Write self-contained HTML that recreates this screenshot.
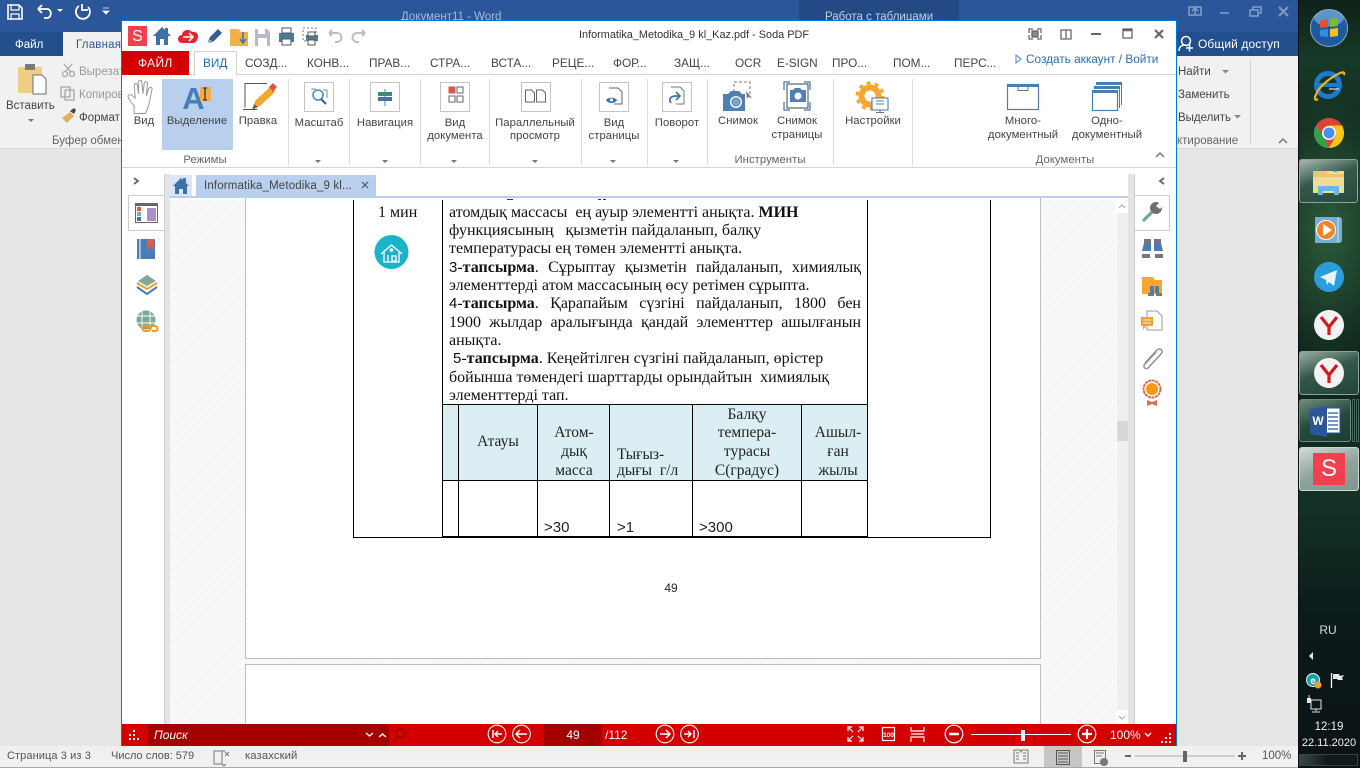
<!DOCTYPE html>
<html lang="ru"><head><meta charset="utf-8"><title>Soda PDF</title>
<style>
html,body{margin:0;padding:0;width:1360px;height:768px;overflow:hidden;background:#e6e6e6}
body{position:relative;font-family:"Liberation Sans",sans-serif;font-size:11.5px;color:#444}
.b{position:absolute}
.t{position:absolute;white-space:pre;line-height:14px}
.c{transform:translateX(-50%);text-align:center}
.w{font-size:11.5px;color:#444}
.r{font-size:11.3px;letter-spacing:.05px;color:#444}
.tab{font-size:11.8px;color:#444;top:56px}
.d{font-family:"Liberation Serif",serif;font-size:16px;color:#111;left:449px;line-height:18px}
.j{width:412px;white-space:normal;text-align:justify;text-align-last:justify}
.h{font-family:"Liberation Serif",serif;font-size:15.5px;color:#222}
.v{position:absolute;width:1px;background:#000}
.s{position:absolute;width:1px;background:#dcdcdc;top:79px;height:86px}
.ibox{position:absolute;width:28px;height:28px;border:1px solid #c4c4c4;top:82px;background:#fff}
.hatch{background:repeating-linear-gradient(135deg,#f0f0f0 0,#f0f0f0 1px,#fbfbfb 1px,#fbfbfb 3px)}
</style></head><body>

<!-- Word window -->
<div class="b" style="left:0;top:0;width:1298px;height:32px;background:#2b579a"></div>
<div class="b" style="left:0;top:32px;width:1298px;height:24px;background:#234f8c"></div>
<div class="b" style="left:799px;top:0;width:160px;height:32px;background:#234a84"></div>
<div class="b" style="left:63px;top:32px;width:60px;height:24px;background:#f1f1f1"></div>
<div class="b" style="left:0;top:56px;width:1298px;height:92px;background:#f1f1f1;border-bottom:1px solid #d8d8d8"></div>
<div class="b" style="left:0;top:149px;width:1298px;height:597px;background:#e6e6e6"></div>
<div class="t" style="left:401px;top:10px;font-size:11.5px;color:#a9b9d3">Документ11 - Word</div>
<div class="t" style="left:825px;top:10px;font-size:11.5px;color:#c4d0e3">Работа с таблицами</div>
<div class="t" style="left:15px;top:38px;color:#fff;font-size:11.5px">Файл</div>
<div class="t" style="left:76px;top:38px;color:#2b579a;font-size:11.5px;letter-spacing:.2px">Главная</div>
<div class="t" style="left:1198px;top:37px;color:#fff;font-size:12px;letter-spacing:.1px">Общий доступ</div>
<div class="t w" style="left:6px;top:99px">Вставить</div>
<div class="t w" style="left:79px;top:65px;color:#999">Вырезать</div>
<div class="t w" style="left:79px;top:88px;color:#999">Копировать</div>
<div class="t w" style="left:79px;top:111px">Формат</div>
<div class="t w" style="left:52px;top:134px;color:#666">Буфер обмена</div>
<div class="t w" style="left:1178px;top:65px">Найти</div>
<div class="t w" style="left:1178px;top:88px">Заменить</div>
<div class="t w" style="left:1178px;top:111px">Выделить</div>
<div class="t w" style="left:1177px;top:134px;color:#666">ктирование</div>
<div class="b" style="left:1250px;top:60px;width:1px;height:84px;background:#d0d0d0"></div>

<!-- Word status bar -->
<div class="b" style="left:0;top:746px;width:1298px;height:21px;background:#f0f0f0;border-bottom:1px solid #a8a8a8"></div>
<div class="b" style="left:1044px;top:746px;width:38px;height:21px;background:#c6c6c6"></div>
<div class="t" style="left:7px;top:749px;font-size:11px;color:#555;letter-spacing:.1px">Страница 3 из 3</div>
<div class="t" style="left:111px;top:749px;font-size:11px;color:#555">Число слов: 579</div>
<div class="t" style="left:245px;top:749px;font-size:11.3px;color:#555;letter-spacing:.1px">казахский</div>
<div class="t" style="left:1262px;top:749px;font-size:11.5px;color:#555">100%</div>

<!-- Soda window -->
<div class="b" style="left:121px;top:20px;width:1056px;height:726px;background:#fff;border:solid #0078d7;border-width:1px 1px 0 1px;box-sizing:border-box"></div>
<div class="t" style="left:579px;top:28px;font-size:10.9px;color:#333">Informatika_Metodika_9 kl_Kaz.pdf - Soda PDF</div>

<div class="b" style="left:122px;top:74px;width:1054px;height:1px;background:#d4d4d4"></div>
<div class="b" style="left:122px;top:51px;width:67px;height:24px;background:#d40000"></div>
<div class="b" style="left:194px;top:51px;width:41px;height:24px;background:#fff;border:1px solid #d0d0d0;border-bottom:none"></div>
<div class="t" style="left:138px;top:56px;color:#fff;font-size:12px;letter-spacing:.3px">ФАЙЛ</div>
<div class="t tab" style="left:203px;color:#1e6fc0">ВИД</div>
<div class="t tab" style="left:245px">СОЗД...</div>
<div class="t tab" style="left:307px">КОНВ...</div>
<div class="t tab" style="left:369px">ПРАВ...</div>
<div class="t tab" style="left:430px">СТРА...</div>
<div class="t tab" style="left:491px">ВСТА...</div>
<div class="t tab" style="left:552px">РЕЦЕ...</div>
<div class="t tab" style="left:613px">ФОР...</div>
<div class="t tab" style="left:674px">ЗАЩ...</div>
<div class="t tab" style="left:735px">OCR</div>
<div class="t tab" style="left:777px">E-SIGN</div>
<div class="t tab" style="left:832px">ПРО...</div>
<div class="t tab" style="left:893px">ПОМ...</div>
<div class="t tab" style="left:954px">ПЕРС...</div>
<div class="t" style="left:1026px;top:52px;color:#2a6cb5;font-size:11.8px">Создать аккаунт / Войти</div>

<!-- Soda ribbon -->
<div class="b" style="left:162px;top:79px;width:71px;height:71px;background:#b8cfed"></div>
<div class="b" style="left:122px;top:167px;width:1054px;height:1px;background:#d4d4d4"></div>
<div class="s" style="left:288px"></div><div class="s" style="left:349px"></div><div class="s" style="left:420px"></div><div class="s" style="left:489px"></div><div class="s" style="left:581px"></div><div class="s" style="left:647px"></div><div class="s" style="left:707px"></div><div class="s" style="left:833px"></div><div class="s" style="left:912px"></div>
<div class="ibox" style="left:304px"></div><div class="ibox" style="left:370px"></div><div class="ibox" style="left:440px"></div><div class="ibox" style="left:521px"></div><div class="ibox" style="left:599px"></div><div class="ibox" style="left:662px"></div>

<div class="t r c" style="left:144px;top:114px">Вид</div>
<div class="t r c" style="left:197px;top:114px">Выделение</div>
<div class="t r c" style="left:258px;top:114px">Правка</div>
<div class="t r c" style="left:319px;top:116px">Масштаб</div>
<div class="t r c" style="left:385px;top:116px">Навигация</div>
<div class="t r c" style="left:455px;top:116px">Вид</div>
<div class="t r c" style="left:455px;top:129px">документа</div>
<div class="t r c" style="left:535px;top:116px">Параллельный</div>
<div class="t r c" style="left:535px;top:129px">просмотр</div>
<div class="t r c" style="left:614px;top:116px">Вид</div>
<div class="t r c" style="left:614px;top:129px">страницы</div>
<div class="t r c" style="left:677px;top:116px">Поворот</div>
<div class="t r c" style="left:738px;top:114px">Снимок</div>
<div class="t r c" style="left:797px;top:114px">Снимок</div>
<div class="t r c" style="left:797px;top:128px">страницы</div>
<div class="t r c" style="left:873px;top:114px">Настройки</div>
<div class="t r c" style="left:1023px;top:114px">Много-</div>
<div class="t r c" style="left:1023px;top:128px">документный</div>
<div class="t r c" style="left:1107px;top:114px">Одно-</div>
<div class="t r c" style="left:1107px;top:128px">документный</div>
<div class="t r c" style="left:205px;top:153px;color:#666">Режимы</div>
<div class="t r c" style="left:770px;top:153px;color:#666">Инструменты</div>
<div class="t r c" style="left:1065px;top:153px;color:#666">Документы</div>

<!-- Tab strip -->
<div class="b" style="left:170px;top:175px;width:22px;height:21px;background:#dbe6f5"></div>
<div class="b" style="left:196px;top:175px;width:180px;height:21px;background:#b8cfed"></div>
<div class="b" style="left:170px;top:196px;width:958px;height:2px;background:#b8cfed"></div>
<div class="t" style="left:204px;top:179px;font-size:11.5px;color:#444;letter-spacing:.15px">Informatika_Metodika_9 kl...</div>

<!-- side gutters -->
<div class="b" style="left:164px;top:174px;width:6px;height:550px;background:#e4e4e4;border-left:1px solid #d0d0d0;box-sizing:border-box"></div>
<div class="b" style="left:1128px;top:174px;width:7px;height:550px;background:#e4e4e4;border-right:1px solid #d0d0d0;box-sizing:border-box"></div>
<div class="b" style="left:128px;top:195px;width:36px;height:36px;background:#fff;border:1px solid #ccc;border-right:none;box-sizing:border-box"></div>
<div class="b" style="left:1135px;top:195px;width:35px;height:36px;background:#fff;border:1px solid #ccc;border-left:none;box-sizing:border-box"></div>

<!-- Doc area -->
<div class="b hatch" style="left:170px;top:200px;width:946px;height:524px"></div>
<div class="b" style="left:1117px;top:198px;width:11px;height:526px;background:#fff"></div>
<div class="b" style="left:1117px;top:213px;width:11px;height:497px;background:#efefef"></div>
<div class="b" style="left:1117px;top:421px;width:11px;height:20px;background:#d8d8d8"></div>
<div class="b" style="left:245px;top:198px;width:794px;height:460px;background:#fff;border:solid #bdbdbd;border-width:0 1px 1px 1px"></div>
<div class="b" style="left:245px;top:664px;width:794px;height:60px;background:#fff;border:solid #bdbdbd;border-width:1px 1px 0 1px"></div>

<!-- Doc table -->
<div class="v" style="left:353px;top:200px;height:338px"></div>
<div class="v" style="left:442px;top:200px;height:338px"></div>
<div class="v" style="left:867px;top:200px;height:338px"></div>
<div class="v" style="left:990px;top:200px;height:338px"></div>
<div class="b" style="left:443px;top:405px;width:424px;height:75px;background:#daeef3"></div>
<div class="b" style="left:442px;top:404px;width:425px;height:1px;background:#000"></div>
<div class="b" style="left:442px;top:480px;width:425px;height:1px;background:#000"></div>
<div class="b" style="left:353px;top:537px;width:638px;height:1px;background:#000"></div>
<div class="b" style="left:442px;top:536px;width:425px;height:2px;background:#000"></div>
<div class="v" style="left:458px;top:404px;height:133px"></div>
<div class="v" style="left:537px;top:404px;height:133px"></div>
<div class="v" style="left:609px;top:404px;height:133px"></div>
<div class="v" style="left:692px;top:404px;height:133px"></div>
<div class="v" style="left:801px;top:404px;height:133px"></div>

<div class="t d" style="left:378px;top:204px">1 мин</div>
<div class="t d" style="top:204px">атомдық массасы  ең ауыр элементті анықта. <b>МИН</b></div>
<div class="t d" style="top:222px">функциясының   қызметін пайдаланып, балқу</div>
<div class="t d" style="top:240px">температурасы ең төмен элементті анықта.</div>
<div class="t d j" style="top:259px"><span style="font-family:'Liberation Sans';font-size:15px">3</span>-<b>тапсырма</b>.  Сұрыптау қызметін пайдаланып, химиялық</div>
<div class="t d" style="top:277px">элементтерді атом массасының өсу ретімен сұрыпта.</div>
<div class="t d j" style="top:295px"><span style="font-family:'Liberation Sans';font-size:15px">4</span>-<b>тапсырма</b>. Қарапайым сүзгіні пайдаланып,  1800 бен</div>
<div class="t d j" style="top:314px">1900 жылдар аралығында қандай элементтер ашылғанын</div>
<div class="t d" style="top:332px">анықта.</div>
<div class="t d" style="top:350px"> <span style="font-family:'Liberation Sans';font-size:15px">5</span>-<b>тапсырма</b>. Кеңейтілген сүзгіні пайдаланып, өрістер</div>
<div class="t d" style="top:369px">бойынша төмендегі шарттарды орындайтын  химиялық</div>
<div class="t d" style="top:387px">элементтерді тап.</div>

<div class="t h c" style="left:498px;top:435px">Атауы</div>
<div class="t h c" style="left:574px;top:426px">Атом-</div>
<div class="t h c" style="left:574px;top:445px">дық</div>
<div class="t h c" style="left:574px;top:464px">масса</div>
<div class="t h" style="left:617px;top:448px">Тығыз-</div>
<div class="t h" style="left:617px;top:464px">дығы  г/л</div>
<div class="t h c" style="left:747px;top:408px">Балқу</div>
<div class="t h c" style="left:747px;top:426px">темпера-</div>
<div class="t h c" style="left:747px;top:445px">турасы</div>
<div class="t h c" style="left:747px;top:464px">С(градус)</div>
<div class="t h c" style="left:838px;top:426px">Ашыл-</div>
<div class="t h c" style="left:838px;top:445px">ған</div>
<div class="t h c" style="left:838px;top:464px">жылы</div>
<div class="t" style="left:544px;top:521px;font-size:15px;color:#222">&gt;30</div>
<div class="t" style="left:617px;top:521px;font-size:15px;color:#222">&gt;1</div>
<div class="t" style="left:699px;top:521px;font-size:15px;color:#222">&gt;300</div>
<div class="t c" style="left:671px;top:581px;font-size:12px;color:#222">49</div>

<!-- Red bar -->
<div class="b" style="left:122px;top:724px;width:1054px;height:22px;background:#d40000"></div>
<div class="b" style="left:148px;top:724px;width:241px;height:22px;background:#a50000"></div>
<div class="b" style="left:544px;top:724px;width:58px;height:22px;background:#a50000"></div>
<div class="t" style="left:154px;top:728px;color:#fff;font-style:italic;font-size:12px">Поиск</div>
<div class="t c" style="left:573px;top:728px;color:#fff;font-size:12px">49</div>
<div class="t" style="left:605px;top:728px;color:#fff;font-size:12px">/112</div>
<div class="t" style="left:1110px;top:728px;color:#fff;font-size:12px">100%</div>

<!-- Taskbar -->
<div class="b" style="left:1298px;top:0;width:62px;height:768px;background:radial-gradient(ellipse 70px 150px at 30px 230px,#2c5a3a 0,rgba(34,72,48,.7) 55%,transparent 100%),linear-gradient(180deg,#0f2119 0,#173a28 60px,#10291e 130px,#14301f 230px,#0c1f1a 330px,#133226 500px,#0b1a1a 620px,#0b1216 768px);border-left:1px solid #0a0f0f;box-sizing:border-box"></div>
<div class="b" style="left:1299px;top:159px;width:59px;height:44px;border:1px solid #8fa39a;border-radius:3px;box-sizing:border-box;background:linear-gradient(160deg,#a7b7ae,#35584b 45%,#264a3c)"></div>
<div class="b" style="left:1299px;top:351px;width:60px;height:44px;border:1px solid #8fa39a;border-radius:3px;box-sizing:border-box;background:linear-gradient(160deg,#9aaca2,#34574a 45%,#214538)"></div>
<div class="b" style="left:1299px;top:399px;width:52px;height:43px;border:1px solid #6f8a7e;border-radius:3px;box-sizing:border-box;background:linear-gradient(160deg,#6e8a7c,#254a3c 50%,#1d3e31)"></div>
<div class="b" style="left:1352px;top:399px;width:3px;height:43px;border:1px solid #46645a;box-sizing:border-box"></div>
<div class="b" style="left:1356px;top:399px;width:3px;height:43px;border:1px solid #46645a;box-sizing:border-box"></div>
<div class="b" style="left:1299px;top:447px;width:60px;height:44px;border:1px solid #d0d8d4;border-radius:3px;box-sizing:border-box;background:linear-gradient(160deg,#d2d9d5,#8fa59b 50%,#7d978c)"></div>
<div class="b" style="left:1313px;top:453px;width:32px;height:32px;background:#f2404e"></div>
<div class="t c" style="left:1329px;top:460px;color:#fff;font-size:24px;line-height:18px">S</div>
<div class="b" style="left:1299px;top:754px;width:59px;height:12px;border:1px solid #3a4446;background:linear-gradient(100deg,#3c4648,#11181b 50%);box-sizing:border-box"></div>
<div class="t c" style="left:1328px;top:623px;color:#d6dcdc;font-size:12px">RU</div>
<div class="t c" style="left:1329px;top:720px;color:#f2f2f2;font-size:11.5px">12:19</div>
<div class="t c" style="left:1329px;top:736px;color:#f2f2f2;font-size:11px">22.11.2020</div>

<!-- All icons -->
<svg class="b" style="left:0;top:0" width="1360" height="768" viewBox="0 0 1360 768" fill="none">
<!-- cropped text remnants -->
<path d="M507 199.500h6M598 199.500h3M603 199.500h3" stroke="#333"/>
<!-- Word QAT -->
<g stroke="#fff" stroke-width="1.6"><path d="M8 5h11l3 3v11H8z"/><path d="M11 5v5h8V5M11 19v-5h8v5" stroke-width="1.2"/></g>
<path d="M38 9h10a5 5 0 0 1 0 9h-4M38 9l4-4M38 9l4 4" stroke="#fff" stroke-width="1.8"/><path d="M57 9h6l-3 3z" fill="#fff"/>
<path d="M79 6a7 7 0 1 0 9 1M82 4v6h6" stroke="#fff" stroke-width="1.8"/>
<path d="M103 8h6M103 11h6l-3 3z" fill="#fff" stroke="#fff" stroke-width=".8"/>
<!-- Word winctl -->
<g stroke="#7f9bc4" stroke-width="1.6"><rect x="1189" y="7" width="12" height="8"/><path d="M1195 14V9M1192 11l3-3 3 3"/><path d="M1220 13h9"/><rect x="1250" y="10" width="8" height="6"/><path d="M1253 10V7h8v6h-3"/><path d="M1279 7l9 9M1288 7l-9 9" stroke-width="2"/></g>
<!-- Share person -->
<circle cx="1186" cy="41" r="4.500" stroke="#fff" stroke-width="1.500"/><path d="M1179 51c0-5 3-6 7-6M1186 48h7M1189.500 44.500v7" stroke="#fff" stroke-width="1.500"/>
<!-- Clipboard -->
<rect x="18" y="67" width="24" height="26" fill="#f0cd86"/><rect x="25" y="64" width="10" height="6" fill="#7b7b7b"/><path d="M33 75h9l4 4v15H33z" fill="#fff" stroke="#6d6d6d"/><path d="M28 119h6l-3 3z" fill="#777"/>
<!-- Cut / copy / brush -->
<g stroke="#a6a6a6" stroke-width="1.3"><circle cx="65" cy="74" r="2.500"/><circle cx="72" cy="74" r="2.500"/><path d="M64 64l7 8M72 64l-7 8"/><path d="M61 87h9v10h-9zM65 90h9v10h-9z" fill="#f1f1f1"/></g>
<path d="M62 118l8-6 4 4-7 7z" fill="#e0b060"/><path d="M70 111l4-3 2 2-2 4z" fill="#444"/>
<path d="M1222 70h7l-3.500 3.500z" fill="#888"/><path d="M1234 115h7l-3.500 3.500z" fill="#888"/>
<!-- Word collapse arrow -->
<path d="M1279 143l4-4 4 4" stroke="#777" stroke-width="1.500"/>

<!-- Soda QAT -->
<rect x="128" y="26" width="19" height="20" fill="#f2404e"/>
<text x="137.500" y="41" font-family="Liberation Sans" font-size="16" fill="#fff" text-anchor="middle">S</text>
<path d="M153 36l9-9 3 3v-2h3v5l3 3h-3v9h-4v-6h-4v6h-4v-9z" fill="#3d72a8"/>
<path d="M182 43a4 4 0 0 1 0-8 5 5 0 0 1 5-5c3 0 4 1 5 2 3-1 6 1 6 4 0 4-2 7-5 7z" fill="#e5242f"/>
<path d="M183 37h9M189 33l4 4-4 4" stroke="#fff" stroke-width="1.600"/>
<path d="M207 44l3-7 8-8 4 4-8 8z" fill="#2f5f93"/><path d="M207 44l4-4" stroke="#fff"/>
<path d="M230 29h9l2 3h7v14h-18z" fill="#f2b04a"/><path d="M243 32v10M240 39l3 4 3-4" stroke="#3b73ac" stroke-width="1.500"/>
<path d="M255 29h12l3 3v14h-15z" fill="#b7bac6"/><rect x="258" y="29" width="7" height="5" fill="#fff"/><rect x="258" y="38" width="9" height="8" fill="#fff"/>
<path d="M279 33h15v9h-15z" fill="#4a7c9e"/><rect x="282" y="28" width="9" height="5" fill="#fff" stroke="#555"/><rect x="282" y="39" width="9" height="6" fill="#fff" stroke="#555"/>
<rect x="303" y="28" width="13" height="13" stroke="#777" stroke-dasharray="2 2"/><path d="M306 35h12v6h-12z" fill="#55778f"/><rect x="308" y="32" width="7" height="4" fill="#fff" stroke="#555"/><rect x="308" y="40" width="7" height="5" fill="#fff" stroke="#555"/>
<path d="M329 33h8a4 4 0 0 1 0 9h-2M329 33l3-3M329 33l3 3" stroke="#bdbdbd" stroke-width="2"/>
<path d="M365 33h-8a4 4 0 0 0 0 9h2M365 33l-3-3M365 33l-3 3" stroke="#bdbdbd" stroke-width="2"/>
<!-- Soda win ctl -->
<g stroke="#666" stroke-width="1.300"><path d="M1029 33v-4h4M1041 33v-4h-4M1029 35v4h4M1041 35v4h-4"/><rect x="1032" y="31" width="6" height="6" fill="#888"/><path d="M1061 30h5v9h-5zM1066 30h5v9h-5" /><path d="M1091 34h10" stroke-width="2"/><rect x="1123" y="29" width="9" height="9"/><path d="M1123 30h9" stroke-width="2.500" /><path d="M1155 30l8 8M1163 30l-8 8" stroke-width="2.200"/></g>
<path d="M1016 55l5 4-5 4z" stroke="#4c88c8"/>
<!-- Hand -->
<path d="M135 107c-3-3-7-8-5-10 3-1 5 3 6 3l-1-11c0-3 3-3 3 0l1 7 0-10c0-3 3-3 3 0l1 10 1-9c1-3 4-2 3 1l-1 10 2-6c1-3 4-2 3 1l-2 10c-1 5-2 8-4 11l-10 0z" stroke="#999" stroke-width=".9" fill="#fff" transform="translate(143 97) scale(1.1) translate(-143 -99)"/>
<!-- Selection A -->
<text x="193.500" y="109" font-family="Liberation Sans" font-weight="bold" font-size="31" fill="#4a7db8" text-anchor="middle">A</text>
<rect x="200" y="87" width="11" height="14" fill="#f2ad50"/><path d="M203 88h4M203 100h4M205 88v12" stroke="#222" stroke-width="1.100"/>
<!-- Edit pencil -->
<path d="M267 83.500h-22v24" stroke="#555"/><path d="M243 109.500h14" stroke="#555"/>
<path d="M253 108l2-7 15-14 5 5-15 14z" fill="#f2a72e"/><path d="M269 87l4-4 4 4-4 5z" fill="#d9584a"/><path d="M252 110l2-6 4 3z" fill="#666"/>
<!-- Zoom -->
<circle cx="318" cy="95" r="5" stroke="#4e8ac4" stroke-width="1.600"/><path d="M321 99l5 5" stroke="#4e5a6a" stroke-width="2"/><path d="M323 90h4v8M312 90v-1h4" stroke="#888"/>
<!-- Nav -->
<path d="M385 89v17" stroke="#777"/><rect x="378" y="92" width="14" height="4" fill="#3c8a80"/><rect x="378" y="97" width="14" height="4" fill="#3d74ad"/>
<!-- View doc -->
<rect x="449" y="87" width="6" height="6" stroke="#d9584a" fill="#d9584a"/><rect x="457" y="87" width="6" height="6" stroke="#666"/><rect x="449" y="96" width="6" height="6" stroke="#666"/><rect x="457" y="96" width="6" height="6" stroke="#666"/>
<!-- Parallel -->
<g stroke="#666"><path d="M525.500 90h6l3 3v9h-9zM536.500 90h6l3 3v9h-9z"/></g>
<!-- Page view -->
<path d="M609 88h9l4 4v12h-8" stroke="#666"/><path d="M606 100c2-3 9-3 11 0-2 4-9 4-11 0z" fill="#3d74ad"/><circle cx="611.500" cy="100" r="1.500" fill="#fff"/>
<!-- Rotate -->
<path d="M671 87h9l4 4v13h-8" stroke="#777"/><path d="M671 103c-3-4 0-7 5-7h3M676 92l4 4-4 4" stroke="#3d74ad" stroke-width="1.700"/>
<!-- Snapshot -->
<path d="M723 94h5l3-3h8l3 3h3v17h-22z" fill="#4e80b5"/><circle cx="736" cy="102" r="6" fill="#fff"/><circle cx="736" cy="102" r="4" fill="#7da6cf" stroke="#4e80b5"/>
<rect x="734" y="82" width="16" height="14" stroke="#777" stroke-dasharray="3 2"/><path d="M746 91l6 7-4-1-1 2z" fill="#777"/>
<path d="M784 90v-8h6M810 90v-8h-6M784 102v8h6M810 102v8h-6" stroke="#3d74ad" stroke-width="1.200"/>
<rect x="787" y="84" width="21" height="24" stroke="#444"/><path d="M790 90h3l2-2h5l2 2h4v12h-16z" fill="#4e80b5"/><circle cx="798" cy="96" r="4" fill="#fff" stroke="#4e80b5"/>
<!-- Settings -->
<circle cx="870" cy="96" r="8.500" stroke="#f7a731" stroke-width="6"/><circle cx="870" cy="96" r="13" stroke="#f7a731" stroke-width="3" stroke-dasharray="4 4.200"/>
<rect x="872" y="98" width="16" height="12" fill="#fff" stroke="#4a7db0" stroke-width="1.100"/><path d="M876 101h8M876 104h8M880 110v2M876 112.500h8" stroke="#4a7db0"/>
<!-- Multi / single doc -->
<rect x="1007.500" y="84.500" width="31" height="25" stroke="#4a7db0" stroke-width="1.200"/><rect x="1007" y="84" width="32" height="3" fill="#4a7db0"/><path d="M1018 87v3.500h10V87" stroke="#4a7db0"/>
<rect x="1096" y="82" width="26" height="3" fill="#4a7db0"/><path d="M1121.500 85v20" stroke="#4a7db0"/>
<rect x="1094" y="86" width="26" height="3" fill="#4a7db0"/><path d="M1119.500 89v19" stroke="#4a7db0"/>
<rect x="1092.500" y="91.500" width="25" height="19" fill="#fff" stroke="#4a7db0" stroke-width="1.200"/><rect x="1092" y="90" width="26" height="3" fill="#4a7db0"/>
<path d="M1156 157l4-4 4 4" stroke="#777" stroke-width="1.500"/>
<g fill="#777"><path d="M315 160h6l-3 3z"/><path d="M382 160h6l-3 3z"/><path d="M451 160h6l-3 3z"/><path d="M532 160h6l-3 3z"/><path d="M610 160h6l-3 3z"/><path d="M673 160h6l-3 3z"/></g>
<!-- Tab strip icons -->
<path d="M134 178l4 3-4 3" stroke="#666" stroke-width="1.800"/><path d="M1164 178l-4 3 4 3" stroke="#666" stroke-width="1.800"/>
<path d="M173 186l8-8 2 2v-2h3v5l3 3h-2v8h-4v-5h-4v5h-4v-8z" fill="#3d72a8"/>
<path d="M362 182l6 6M368 182l-6 6" stroke="#555" stroke-width="1.200"/>
<!-- Left panel -->
<rect x="135.500" y="203.500" width="22" height="19" stroke="#666"/><rect x="135" y="203" width="23" height="3" fill="#666"/><rect x="137" y="207" width="4" height="4" fill="#d9584a"/><rect x="137" y="212" width="4" height="4" fill="#7fb3a0"/><rect x="137" y="217" width="4" height="4" fill="#3d74ad"/><rect x="147" y="208" width="9" height="13" fill="#a98fcc"/>
<rect x="137" y="239" width="18" height="20" fill="#4a7db8"/><path d="M147 239h7v11l-3.500-3-3.500 3z" fill="#e25b3e"/><path d="M140 239v20" stroke="#fff"/>
<path d="M147 275l9 6-9 5-9-5z" fill="#7fa898"/><path d="M137 283l10 6 10-6" stroke="#f2a01e" stroke-width="2"/><path d="M137 287l10 7 10-7" stroke="#4a7db8" stroke-width="2"/>
<circle cx="146" cy="320" r="9.500" fill="#7fa898"/><path d="M137 316h18M137 323h18M142 311v18M150 311v18" stroke="#fff" stroke-width=".9"/>
<path d="M145 326h3a2.500 2.500 0 0 1 0 5h-3a2.500 2.500 0 0 1 0-5zM152 326h3a2.500 2.500 0 0 1 0 5h-3" stroke="#f29b12" stroke-width="2"/>
<!-- Right panel -->
<circle cx="1156" cy="208" r="6" fill="#6f6f6f"/><path d="M1156 206l6-6 3 4-5 5z" fill="#fff"/><path d="M1152 212l-9 9" stroke="#6fa792" stroke-width="3.200"/>
<rect x="1144" y="239" width="7" height="4" fill="#777"/><rect x="1154" y="239" width="7" height="4" fill="#777"/><path d="M1144 243h7v8h-9zM1154 243h7l2 8h-9z" fill="#4a7db8"/><rect x="1142" y="254" width="8" height="4" fill="#777"/><rect x="1155" y="254" width="8" height="4" fill="#777"/>
<path d="M1142 277h11l2 3h7v14h-20z" fill="#f7a731"/><path d="M1150 286h4v7h-4zM1155 286h4v7h-4z" fill="#4a7db8"/><rect x="1148" y="293" width="6" height="3" fill="#777"/><rect x="1156" y="293" width="6" height="3" fill="#777"/>
<path d="M1147 311h10l5 5v14h-15z" fill="#fff" stroke="#999"/><path d="M1141 317h12v9h-7l-3 4v-4h-2z" fill="#eda32f"/><path d="M1143 320h8M1143 323h8" stroke="#fff" stroke-width=".8"/>
<path d="M1145 363l12-13c3-3 7 1 4 4l-13 14c-2 2-6-1-3-4l11-12" stroke="#8f8f8f" stroke-width="1.500"/>
<circle cx="1152" cy="389" r="8.500" stroke="#e2694a" stroke-width="2" stroke-dasharray="3 .6"/><circle cx="1152" cy="389" r="6" fill="#f29b12"/><path d="M1147 400l5 2 5-2v6l-5-2-5 2z" fill="#e2694a"/>
<!-- Scrollbar arrows -->
<path d="M1119 208l3-3 3 3" stroke="#aaa"/><path d="M1119 716l3 3 3-3" stroke="#aaa"/>
<!-- House circle -->
<circle cx="391.500" cy="252" r="17" fill="#1cb3c8"/><path d="M381 254l10.500-9 10.500 9M384 251v11h15v-11M388 262v-7M392 256h4v5h-4z" stroke="#fff" stroke-width="1.300"/><circle cx="391.500" cy="250" r="1.800" fill="#fff"/>
<!-- Red bar icons -->
<g fill="#fff"><rect x="129" y="738" width="2" height="2"/><rect x="133" y="738" width="2" height="2"/><rect x="137" y="738" width="2" height="2"/><rect x="129" y="734" width="2" height="2"/><rect x="133" y="734" width="2" height="2"/><rect x="133" y="730" width="2" height="2"/></g>
<path d="M366 733l3.500 3 3.500-3M379 737l3.500-3 3.500 3" stroke="#fff" stroke-width="1.400"/>
<circle cx="400" cy="733" r="4.500" stroke="#a50000" stroke-width="1.800"/><path d="M397 737l-4 5" stroke="#a50000" stroke-width="2"/>
<g stroke="#fff" stroke-width="1.100"><circle cx="497" cy="734" r="8.800"/><circle cx="521.500" cy="734" r="8.800"/><circle cx="665" cy="734" r="8.800"/><circle cx="689.500" cy="734" r="8.800"/>
<g stroke-width="1.500"><path d="M493 730v8M495 734h7M498 731l-3 3 3 3"/><path d="M516 734h11M520 730l-4 4 4 4"/><path d="M660 734h10M666 730l4 4-4 4"/><path d="M684 734h7M688 731l3 3-3 3M694 730v8"/></g></g>
<g stroke="#fff" stroke-width="1.200"><path d="M848 731v-4h4M863 731v-4h-4M848 737v4h4M863 737v4h-4M849 728l4 4M862 728l-4 4M849 740l4-4M862 740l-4-4"/><rect x="882.500" y="727.500" width="12" height="13"/><path d="M911 727v4h13v-4M911 742v-5h13v5M911 734h13" /></g>
<text x="888.500" y="737" font-family="Liberation Sans" font-size="6.500" fill="#fff" text-anchor="middle" font-weight="bold">100</text>
<circle cx="954" cy="734" r="8.800" stroke="#fff" stroke-width="1.200"/><path d="M949 734h10" stroke="#fff" stroke-width="2.500"/>
<path d="M971 734.500h100" stroke="#fff"/><rect x="1021" y="730" width="4" height="11" fill="#fff"/>
<circle cx="1087" cy="734" r="8.800" stroke="#fff" stroke-width="1.200"/><path d="M1082 734h10M1087 729v10" stroke="#fff" stroke-width="2.200"/>
<path d="M1145 733l3 3 3-3" stroke="#fff" stroke-width="1.400"/>
<g fill="#fff"><rect x="1161" y="741" width="2" height="2"/><rect x="1165" y="741" width="2" height="2"/><rect x="1169" y="741" width="2" height="2"/><rect x="1165" y="737" width="2" height="2"/><rect x="1169" y="737" width="2" height="2"/><rect x="1169" y="733" width="2" height="2"/></g>
<!-- Status bar icons -->
<path d="M214 751h8v13h-8zM222 751h3M222 764l2 2 2-2" stroke="#777"/><path d="M225 752l4 4M229 752l-4 4" stroke="#777"/>
<path d="M1014 750h6l1 2 1-2h6v13h-14z" stroke="#777"/><path d="M1016 753h3M1016 756h3M1016 759h3M1023 753h3M1023 756h3M1023 759h3" stroke="#777"/>
<rect x="1056.500" y="750.500" width="13" height="14" stroke="#555"/><path d="M1058 753h10M1058 756h10M1058 759h10M1058 762h10" stroke="#555"/>
<rect x="1094.500" y="750.500" width="11" height="13" stroke="#777"/><path d="M1096 753h8M1096 756h6" stroke="#777"/><circle cx="1104" cy="762" r="4" fill="#777"/>
<path d="M1125 756h6M1238 756h8M1242 752v8" stroke="#666" stroke-width="2"/><path d="M1135 756h100" stroke="#aaa"/><rect x="1183" y="751" width="4" height="11" fill="#666"/>
<!-- Windows orb -->
<circle cx="1329" cy="28" r="19" fill="#1e5a9e"/><circle cx="1329" cy="28" r="18.500" stroke="#8fa6b5" stroke-width="1"/><ellipse cx="1329" cy="18" rx="15" ry="8" fill="#8fc4ec" opacity=".55"/>
<path d="M1320 21l8-2v8l-8 1z" fill="#e8502a"/><path d="M1330 19l8-1v8l-8 1z" fill="#7fba2a"/><path d="M1320 30l8-1v8l-8-1z" fill="#2f8fdc"/><path d="M1330 29l8-1v8l-8 1z" fill="#f5c21a"/>
<!-- IE -->
<circle cx="1328" cy="85" r="11.500" stroke="#1e78d2" stroke-width="5"/><path d="M1317 85h22" stroke="#1e78d2" stroke-width="4"/><path d="M1318 99c-6 4-3-8 8-17 10-8 20-13 18-7" stroke="#e6b52a" stroke-width="2.200"/><path d="M1329 89h10" stroke="#fff" stroke-width="1"/>
<!-- Chrome -->
<circle cx="1329" cy="133" r="15" fill="#dc4337"/><path d="M1329 148a15 15 0 0 1-13-22.500l7 11z" fill="#2ea54c"/><path d="M1329 148a15 15 0 0 0 13-22.500h-13l7 10z" fill="#f8c51c"/><circle cx="1329" cy="133" r="7" fill="#fff"/><circle cx="1329" cy="133" r="5.500" fill="#4a8ff0"/>
<!-- Explorer -->
<path d="M1313 171h31v22h-31z" fill="#f2dc94"/><path d="M1313 171h13l2 3h16v3h-31z" fill="#e8c870"/><rect x="1316" y="168" width="3" height="2" fill="#3db54a"/><rect x="1325" y="169" width="3" height="2" fill="#d8432e"/><rect x="1334" y="170" width="3" height="2" fill="#3d8ed8"/><path d="M1318 195v-9h21v9h-5v-4h-11v4z" fill="#6cb7e6"/>
<!-- Media player -->
<path d="M1315 217h25l2 2v22l-2 2h-25z" fill="#78aed4"/><path d="M1338 218v24" stroke="#cfe3f2"/><circle cx="1326" cy="230" r="9.500" fill="#f28526" stroke="#fff" stroke-width="1"/><path d="M1323 224l9 6-9 6z" fill="#fff"/>
<!-- Telegram -->
<circle cx="1329" cy="277" r="15" fill="#2a9edb"/><path d="M1320 277l17-7-3 16-5-4-2 3-1-5z" fill="#e8f3fb"/>
<!-- Yandex -->
<circle cx="1329" cy="325" r="15" fill="#f3f3f3"/><path d="M1321 317l8 10v8M1337 317l-8 10" stroke="#d6181e" stroke-width="3.200"/>
<circle cx="1329" cy="373" r="15" fill="#f3f3f3"/><path d="M1321 365l8 10v8M1337 365l-8 10" stroke="#d6181e" stroke-width="3.200"/>
<!-- Word -->
<rect x="1322" y="408" width="18" height="25" fill="#fff" stroke="#2b579a"/><path d="M1328 413h10M1328 417h10M1328 421h10M1328 425h10M1328 429h10" stroke="#2b579a" stroke-width="1.300"/><path d="M1310 409l17-3v31l-17-3z" fill="#2b579a"/>
<text x="1318" y="425" font-family="Liberation Sans" font-weight="bold" font-size="12" fill="#fff" text-anchor="middle">W</text>
<!-- Tray -->
<path d="M1313 652v8l-4-4z" fill="#e6e6e6"/>
<circle cx="1313" cy="680" r="6.500" fill="#11a6a8" stroke="#e8f5f5"/><text x="1313" y="684" font-family="Liberation Sans" font-weight="bold" font-size="10" fill="#fff" text-anchor="middle">e</text><circle cx="1318" cy="685" r="3.500" fill="#f0a020"/>
<path d="M1331.500 673v15" stroke="#fff" stroke-width="1.300"/><path d="M1333 674h6l1 2 4-1-2 3 1 2h-5l-1-1h-4z" fill="#e6e6e6"/>
<rect x="1311" y="700" width="10" height="9" stroke="#e6e6e6"/><path d="M1316 709v2M1312 712h8" stroke="#e6e6e6"/><rect x="1307" y="698" width="4" height="5" fill="#e6e6e6"/><path d="M1309 695v3" stroke="#e6e6e6"/>
</svg>
</body></html>
